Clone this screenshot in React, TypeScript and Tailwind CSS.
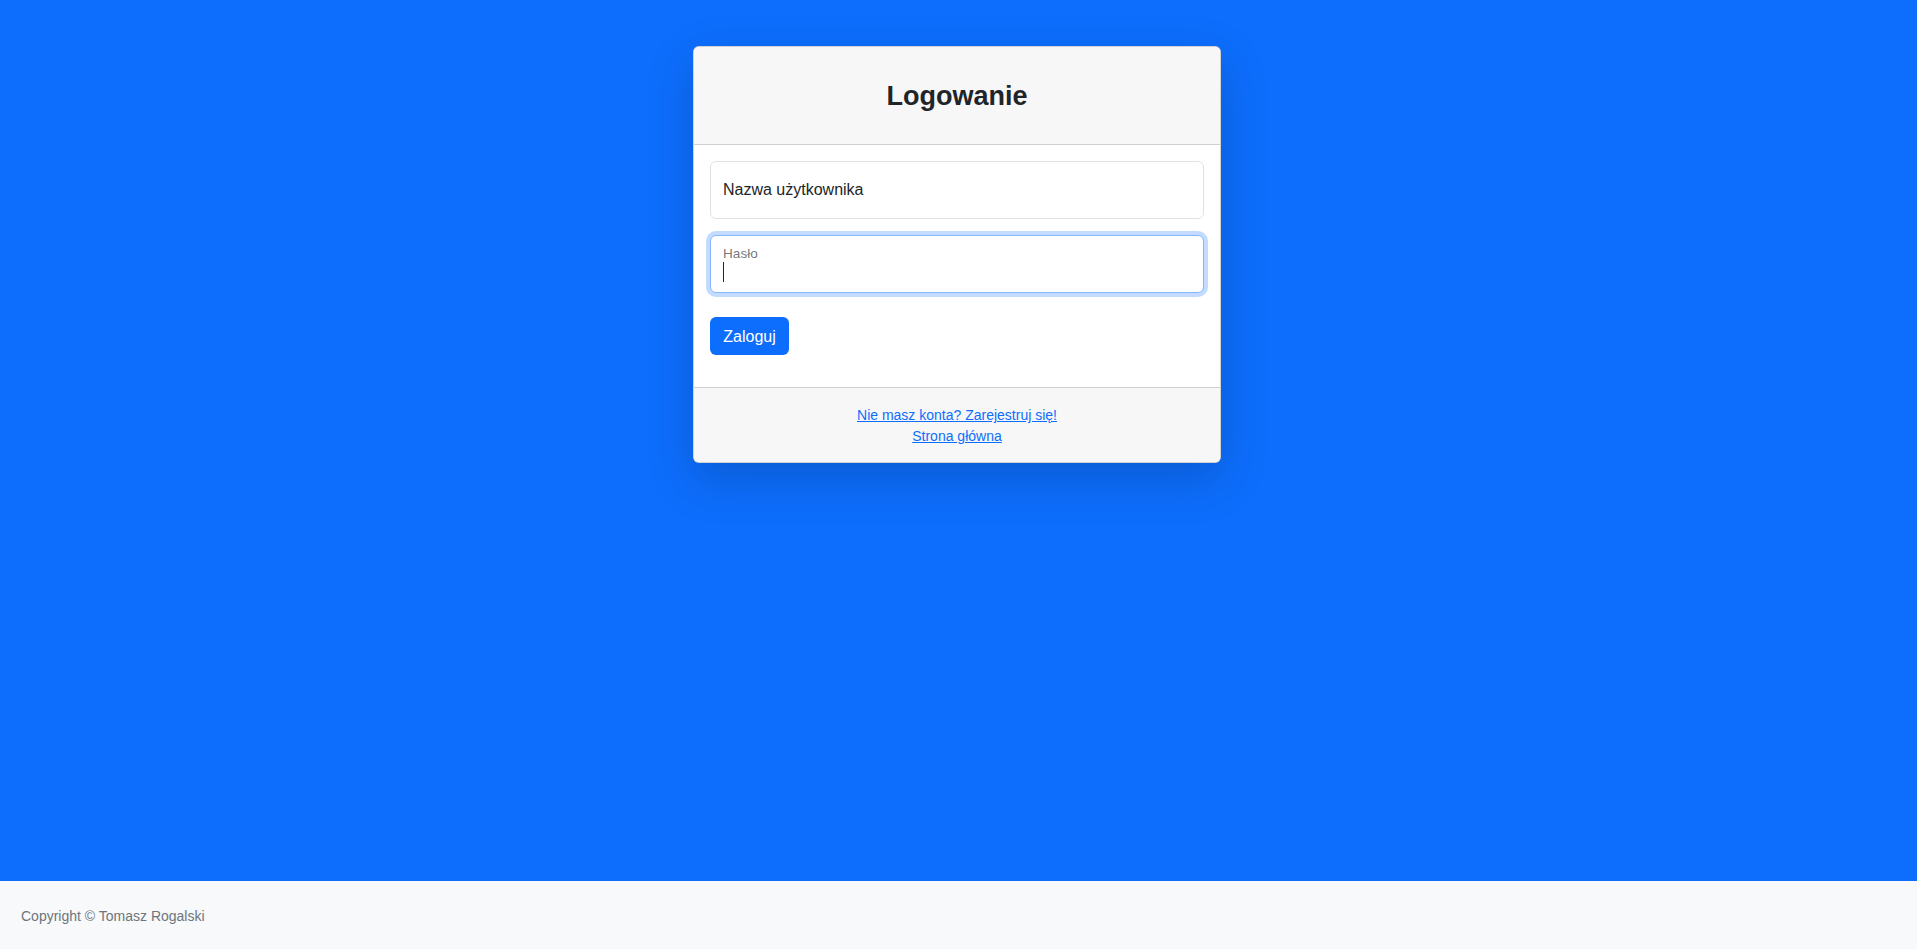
import React from "react";

export default function App() {
  return (
    <div className="flex flex-col h-screen font-['Liberation_Sans',Arial,sans-serif] text-[#212529]">
      <main className="flex-1 bg-[#0d6efd] flex justify-center items-start pr-[3px]">
        <div className="mt-[46px] w-[528px] bg-white border border-[rgba(0,0,0,0.175)] rounded-[6px] shadow-[0_1rem_3rem_rgba(0,0,0,0.175)] overflow-hidden">
          <div className="bg-[#f7f7f7] border-b border-[#d0d0d1] h-[98px] flex items-center justify-center">
            <h3 className="text-[27px] font-semibold leading-[1.2] text-[#212529] pt-[2px]">Logowanie</h3>
          </div>
          <div className="px-4 pt-4 pb-8">
            <div className="relative mb-4">
              <div className="h-[58px] border border-[#dee2e6] rounded-[6px] bg-white flex items-center px-3">
                <span className="text-base leading-6 text-[#212529]">Nazwa użytkownika</span>
              </div>
            </div>
            <div className="relative mb-6">
              <div className="h-[58px] border border-[#86b7fe] rounded-[6px] bg-white shadow-[0_0_0_4px_rgba(13,110,253,0.25)] px-3 pt-[8px]">
                <div className="text-[13.6px] leading-5 text-[rgba(33,37,41,0.65)]">Hasło</div>
                <span className="absolute left-[13px] top-[27px] w-px h-5 bg-[#212529]"></span>
              </div>
            </div>
            <button className="h-[38px] bg-[#0d6efd] text-white text-base leading-6 px-3 pt-[2px] rounded-[6px] w-[79px]">
              Zaloguj
            </button>
          </div>
          <div className="bg-[#f7f7f7] border-t border-[#d0d0d1] pt-[17px] pb-[15px] flex flex-col items-center text-sm leading-[21px]">
            <a href="#" className="text-[#0d6efd] underline">Nie masz konta? Zarejestruj się!</a>
            <a href="#" className="text-[#0d6efd] underline">Strona główna</a>
          </div>
        </div>
      </main>
      <footer className="h-[68px] bg-[#f8f9fa] flex items-center pl-[21px] pt-[2px]">
        <span className="text-sm text-[#6c757d]">Copyright © Tomasz Rogalski</span>
      </footer>
    </div>
  );
}
